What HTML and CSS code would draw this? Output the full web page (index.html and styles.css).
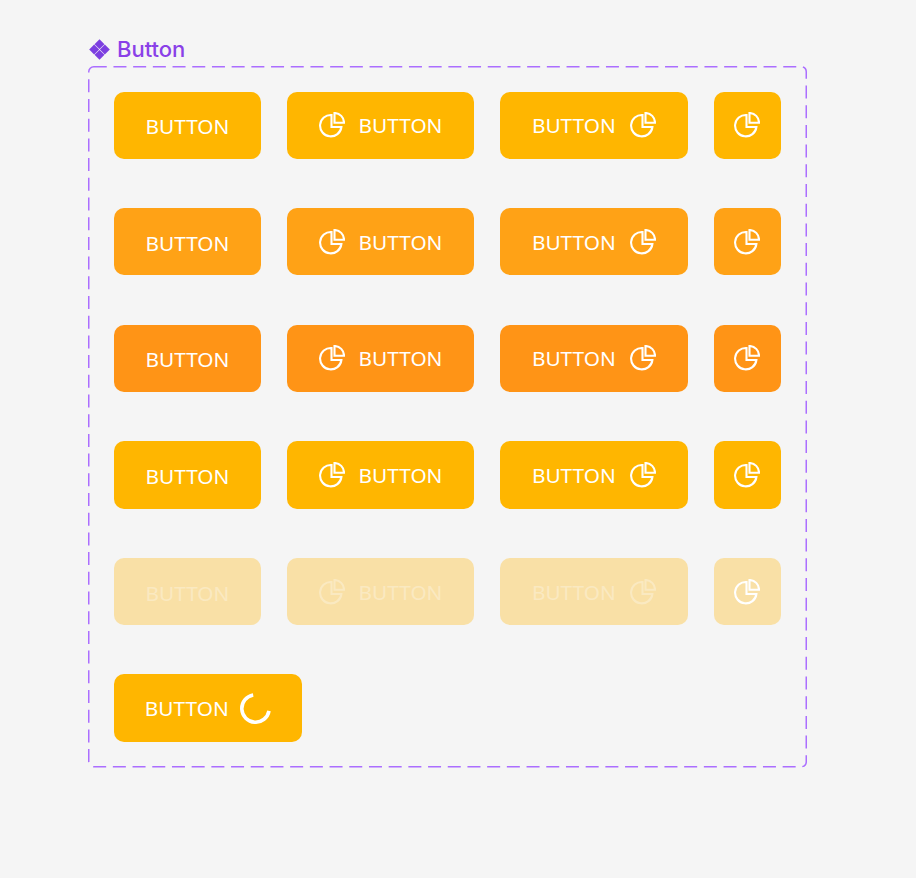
FILE: index.html
```html
<!DOCTYPE html>
<html lang="en">
  <head>
    <meta charset="UTF-8" />
    <title>Button</title>
    <link rel="stylesheet" href="styles.css">
  </head>
  <body>
    <svg class="defs" width="0" height="0">
      <symbol id="pie" viewBox="0 0 26 26">
        <path d="M12.500 3A10.700 10.700 0 1 0 22.400 15H12.500z" />
        <path d="M15.500 1A9.600 9.600 0 0 1 25 10.700H15.500z" />
      </symbol>
    </svg>
    <div class="title">
      <svg class="title-icon" viewBox="0 0 22 22">
        <path d="M11 0.200l5.200 5.200-5.200 5.200-5.200-5.200z" />
        <path d="M5.400 5.800l5.200 5.200-5.200 5.200-5.200-5.200z" />
        <path d="M16.600 5.800l5.200 5.200-5.200 5.200-5.200-5.200z" />
        <path d="M11 11.400l5.200 5.200-5.200 5.200-5.200-5.200z" />
      </svg>
      Button
    </div>
    <div class="frame">
      <svg class="frame-line" width="719" height="701.500">
        <rect x="0.750" y="0.750" width="717.500" height="700" rx="5" />
      </svg>
      <div class="row">
        <button class="btn btn-text">BUTTON</button>
        <button class="btn btn-wide"><svg class="icon"><use href="#pie" /></svg>BUTTON</button>
        <button class="btn btn-wide">BUTTON<svg class="icon"><use href="#pie" /></svg></button>
        <button class="btn btn-square"><svg class="icon"><use href="#pie" /></svg></button>
      </div>
      <div class="row hover">
        <button class="btn btn-text">BUTTON</button>
        <button class="btn btn-wide"><svg class="icon"><use href="#pie" /></svg>BUTTON</button>
        <button class="btn btn-wide">BUTTON<svg class="icon"><use href="#pie" /></svg></button>
        <button class="btn btn-square"><svg class="icon"><use href="#pie" /></svg></button>
      </div>
      <div class="row pressed">
        <button class="btn btn-text">BUTTON</button>
        <button class="btn btn-wide"><svg class="icon"><use href="#pie" /></svg>BUTTON</button>
        <button class="btn btn-wide">BUTTON<svg class="icon"><use href="#pie" /></svg></button>
        <button class="btn btn-square"><svg class="icon"><use href="#pie" /></svg></button>
      </div>
      <div class="row">
        <button class="btn btn-text">BUTTON</button>
        <button class="btn btn-wide"><svg class="icon"><use href="#pie" /></svg>BUTTON</button>
        <button class="btn btn-wide">BUTTON<svg class="icon"><use href="#pie" /></svg></button>
        <button class="btn btn-square"><svg class="icon"><use href="#pie" /></svg></button>
      </div>
      <div class="row disabled">
        <button class="btn btn-text"><span class="faded">BUTTON</span></button>
        <button class="btn btn-wide"><span class="faded inner"><svg class="icon"><use href="#pie" /></svg>BUTTON</span></button>
        <button class="btn btn-wide"><span class="faded inner">BUTTON<svg class="icon"><use href="#pie" /></svg></span></button>
        <button class="btn btn-square"><svg class="icon"><use href="#pie" /></svg></button>
      </div>
      <div class="row">
        <button class="btn btn-loading">BUTTON
          <svg class="spinner" viewBox="0 0 31 31">
            <path d="M13.200 2A13.700 13.700 0 1 0 29 17.900" />
          </svg>
        </button>
      </div>
    </div>
  </body>
</html>
```

FILE: styles.css
```css
body {
  margin: 0;
  height: 878px;
  overflow: hidden;
  background: #f5f5f5;
  padding: 38px 0 0 88px;
  box-sizing: border-box;
  font-family: "Noto Sans", sans-serif;
}
.defs {
  position: absolute;
}
.title {
  display: flex;
  align-items: center;
  gap: 7px;
  height: 22px;
  margin-bottom: 6px;
  padding-left: 1px;
  font-family: Inter, sans-serif;
  font-size: 22px;
  font-weight: 500;
  color: #8a40e8;
}
.title-icon {
  width: 21px;
  height: 21px;
  fill: #7c3fe0;
}
.frame {
  position: relative;
  width: 719px;
  height: 701.500px;
  box-sizing: border-box;
  padding: 25.500px 26px;
  display: flex;
  flex-direction: column;
  gap: 49.200px;
}
.frame-line {
  position: absolute;
  left: 0;
  top: 0;
  fill: none;
  stroke: #ab6eff;
  stroke-width: 1.500;
  stroke-dasharray: 13 6.700;
}
.row {
  display: flex;
  gap: 26px;
}
.btn {
  height: 67.400px;
  border: none;
  border-radius: 10px;
  padding: 0;
  background: #ffb600;
  color: #fff;
  font-family: "Noto Sans", sans-serif;
  font-size: 20.800px;
  display: flex;
  align-items: center;
  justify-content: center;
  gap: 14px;
}
.btn-text {
  width: 147px;
  padding-top: 2px;
}
.btn-wide {
  width: 187.600px;
}
.btn-square {
  width: 67.600px;
}
.btn-loading {
  width: 187.600px;
  gap: 11px;
}
.icon {
  width: 26px;
  height: 26px;
  fill: none;
  stroke: #fff;
  stroke-width: 2.100;
}
.spinner {
  width: 31px;
  height: 31px;
  fill: none;
  stroke: #fff;
  stroke-width: 3.600;
}
.hover .btn {
  background: #ffa216;
}
.pressed .btn {
  background: #ff9416;
}
.disabled .btn {
  background: #f9e0a6;
}
.faded {
  opacity: 0.3;
}
.inner {
  display: flex;
  align-items: center;
  gap: 14px;
}
```
